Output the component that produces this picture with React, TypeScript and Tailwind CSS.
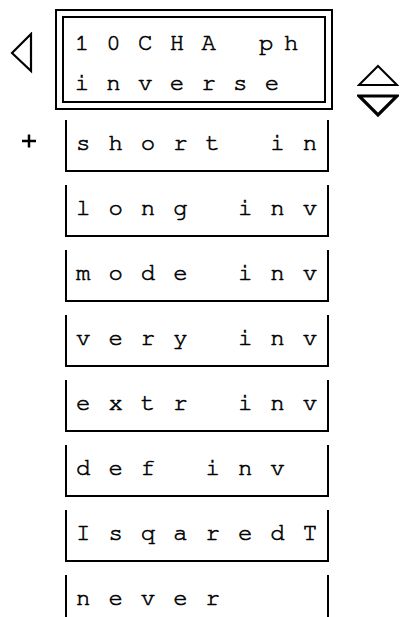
const rows = ["short in", "long inv", "mode inv", "very inv", "extr inv", "def inv", "IsqaredT", "never"];

function Cells({ text, cell }: { text: string; cell: string }) {
  return (
    <>
      {text.split("").map((ch, i) => (
        <span key={i} className={`inline-block text-center ${cell}`}>
          {ch === " " ? "\u00a0" : ch}
        </span>
      ))}
    </>
  );
}

export default function App() {
  return (
    <div className="w-[400px] h-[617px] overflow-hidden bg-white text-black font-['Nimbus_Mono_PS','Nimbus_Mono_L','FreeMono','Courier_New','Liberation_Mono',monospace] text-[24px] [-webkit-text-stroke:0.6px_black]">
      <div className="flex items-start h-[110px] pt-[9px]">
        <div className="w-[55px] pl-[10px] pt-[23px]">
          <svg width="24" height="42" viewBox="0 0 24 42">
            <polygon points="2,21 21,2 21,39" fill="none" stroke="black" strokeWidth="2.2" strokeLinejoin="miter" />
          </svg>
        </div>
        <div className="w-[278px] h-[101px] shrink-0 border-2 border-black p-[5px]">
          <div className="h-full border-2 border-black pl-[2px] pt-[5px] leading-[40px] whitespace-nowrap">
            <div>
              <Cells text="10CHA" cell="w-[31.7px]" />
              <span className="inline-block w-[26px]" />
              <span className="inline-block w-[31.7px] text-center">p</span>
              <span className="inline-block w-[18px] text-center">h</span>
            </div>
            <div>
              <Cells text="inverse" cell="w-[31.7px]" />
            </div>
          </div>
        </div>
        <div className="ml-[24px] mt-[55px] h-0">
          <svg width="42" height="55" viewBox="0 0 42 55">
            <polygon points="21,2 40,21 2,21" fill="none" stroke="black" strokeWidth="2" />
            <polygon points="2,32 40,32 21,51" fill="none" stroke="black" strokeWidth="3.2" />
          </svg>
        </div>
      </div>
      <div className="flex flex-col gap-[13px] mt-[10px]">
        {rows.map((r, i) => (
          <div key={i} className="flex">
            <div className="w-[65px] pl-[22px] pt-[14px]">
              {i === 0 && (
                <svg width="14" height="14" viewBox="0 0 14 14">
                  <line x1="0" y1="7" x2="14" y2="7" stroke="black" strokeWidth="2.5" />
                  <line x1="7" y1="0.5" x2="7" y2="13.5" stroke="black" strokeWidth="2.5" />
                </svg>
              )}
            </div>
            <div className="w-[264px] h-[52px] shrink-0 border-x-2 border-b-2 border-black leading-[44px] pt-[1px] whitespace-nowrap">
              <Cells text={r} cell="w-[32.4px]" />
            </div>
          </div>
        ))}
      </div>
    </div>
  );
}
